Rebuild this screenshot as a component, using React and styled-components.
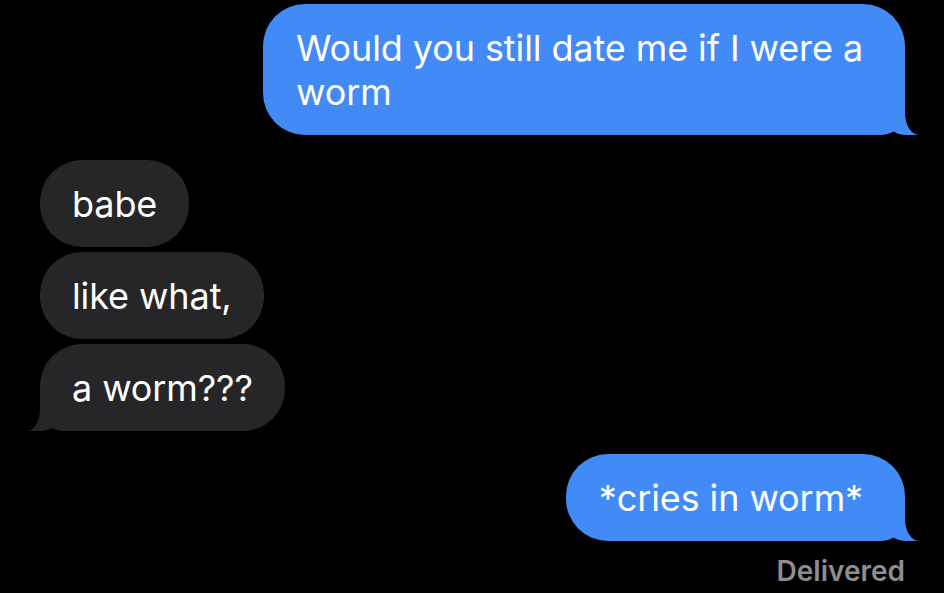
import React from 'react';
import styled, { createGlobalStyle, css } from 'styled-components';

const GlobalStyle = createGlobalStyle`
  html, body {
    margin: 0;
    padding: 0;
    background: #000;
  }
  body {
    font-family: Inter, "Noto Sans", sans-serif;
  }
`;

const BLUE = '#428af5';
const GREY = '#262629';

const Thread = styled.div`
  height: 593px;
  box-sizing: border-box;
  padding: 4px 39px 0 40px;
  background: #000;
  display: flex;
  flex-direction: column;
  overflow: hidden;
`;

const Group = styled.div`
  display: flex;
  flex-direction: column;
  align-items: ${(p) => (p.$mine ? 'flex-end' : 'flex-start')};
  gap: 5px;
  margin-bottom: ${(p) => p.$space || 23}px;
`;

// tail is drawn with two pseudo elements: a coloured blob and a black cut-out
const tailRight = css`
  border-bottom-right-radius: 24px;
  &::before {
    content: '';
    position: absolute;
    bottom: 0;
    right: -14px;
    width: 32px;
    height: 24px;
    background: ${BLUE};
    border-bottom-left-radius: 18px 15px;
  }
  &::after {
    content: '';
    position: absolute;
    bottom: 0;
    right: -22px;
    width: 22px;
    height: 24px;
    background: #000;
    border-bottom-left-radius: 14px 22px;
  }
`;

const tailLeft = css`
  border-bottom-left-radius: 24px;
  &::before {
    content: '';
    position: absolute;
    bottom: 0;
    left: -13px;
    width: 32px;
    height: 24px;
    background: ${GREY};
    border-bottom-right-radius: 18px 15px;
  }
  &::after {
    content: '';
    position: absolute;
    bottom: 0;
    left: -22px;
    width: 22px;
    height: 24px;
    background: #000;
    border-bottom-right-radius: 13px 22px;
  }
`;

const Bubble = styled.div`
  position: relative;
  box-sizing: border-box;
  max-width: 660px;
  padding: ${(p) => (p.$mine ? '22px 42px 21px 33px' : '22px 32px 21px 32px')};
  border-radius: 42px;
  background: ${(p) => (p.$mine ? BLUE : GREY)};
  color: #fff;
  font-size: 36px;
  line-height: 44px;
  letter-spacing: -0.1px;
  ${(p) => p.$tail && (p.$mine ? tailRight : tailLeft)}
`;

const Status = styled.div`
  align-self: flex-end;
  margin-top: -10px;
  color: #8d8d92;
  font-size: 28px;
  font-weight: 600;
  line-height: 34px;
`;

export default function App() {
  return (
    <>
      <GlobalStyle />
      <Thread>
        <Group $mine $space={25}>
          <Bubble $mine $tail>
            Would you still date me if I were a
            <br />
            worm
          </Bubble>
        </Group>
        <Group>
          <Bubble>babe</Bubble>
          <Bubble>like what,</Bubble>
          <Bubble $tail>a worm???</Bubble>
        </Group>
        <Group $mine>
          <Bubble $mine $tail>*cries in worm*</Bubble>
        </Group>
        <Status>Delivered</Status>
      </Thread>
    </>
  );
}
